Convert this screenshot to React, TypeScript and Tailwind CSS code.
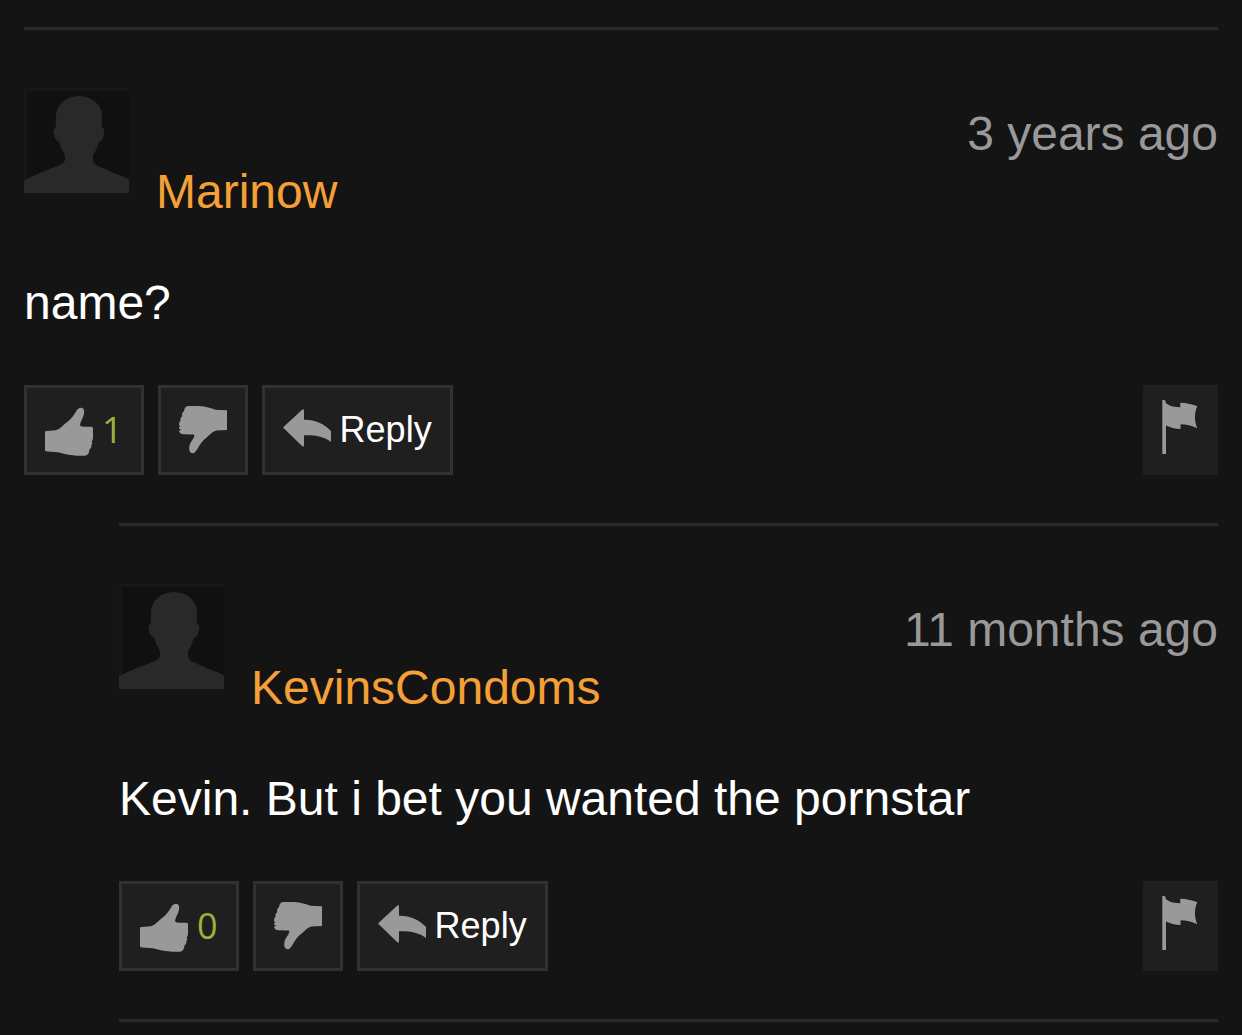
import { useState } from "react";
import clsx from "clsx";

type Comment = {
    id: string;
    author: string;
    posted: string;
    body: string;
    likes: number;
    replies: Comment[];
};

type CommentItemProps = {
    comment: Comment;
};

const comments: Comment[] = [
    {
        id: "c1",
        author: "Marinow",
        posted: "3 years ago",
        body: "name?",
        likes: 1,
        replies: [
            {
                id: "c2",
                author: "KevinsCondoms",
                posted: "11 months ago",
                body: "Kevin. But i bet you wanted the pornstar",
                likes: 0,
                replies: [],
            },
        ],
    },
];

const Avatar = () => (
    <svg viewBox="0 0 105 105" className="size-[105px] shrink-0" aria-hidden="true">
        <rect width="105" height="105" fill="#171717" />
        <rect x="3" y="3" width="102" height="102" fill="#101010" />
        <path
            fill="#292929"
            d="M0 92.500C5 89.500 11 87 18 84L36 77C40 75 41.500 73 41 69C41 65 38.500 63 37 60C36 57.500 36 55 34.700 53.500C32 52.500 31 50.500 30.300 48C29 44 29.300 41 31.700 39.500L32 28A23 20 0 0 1 78 28L77.700 39C80.500 40.500 81 44 79.700 48C79 51 77.500 53 75.300 53.700C73.500 56 73.500 59 72 62C70.500 65 69 66 69 69C69 73 69.500 75.500 73 77.500L91 85.500C96 87.500 101 89 105 91.500V105H0Z"
        />
    </svg>
);

const ThumbUpIcon = () => (
    <svg viewBox="0 0 48 56" className="h-14 w-12 shrink-0" fill="#999999" aria-hidden="true">
        <path d="M0 30C0 29.200 .8 29 2 28.900L10.700 28.200C13.500 27.800 15.500 25.500 18.300 23.200C21 21 23 19.500 25.300 17.300C28 14.500 29.500 12 31 9.500C32.500 7 34 5.800 36 5.800C38.200 5.800 39.300 7.500 39.200 10.500C39 13.500 37.300 16.500 36 19.500C35.200 21.500 34.500 23.500 36 24.200C37.500 24.800 43 24.600 46.500 24.800C47.600 24.900 48 25.300 48 26.300V35.500C48 37 47.700 38.500 46.500 39.500C47.600 40.500 47.500 42 46.300 43C46.800 45 46 46.500 44.500 47.300C44.200 50.500 43.300 53 40.500 53.800H32C26 53.300 21 52.300 16 51C12 49.700 8 49.600 2 49.400C.6 49.300 0 49 0 48Z" />
    </svg>
);

const ThumbDownIcon = () => (
    <svg viewBox="0 0 48 56" className="h-14 w-12 shrink-0" fill="#999999" aria-hidden="true">
        <path d="M0 23C0 21 .3 19.800 1.500 19C1 16.800 1.800 15.200 3.200 14.200C2.700 12 3.500 10.200 5 9.300C5.200 6.500 6.500 4.300 9 4H20C27 4.500 32 6.200 36.500 7.700L48 8.300V28L37.500 28.600C34.500 29.400 32 31.500 29 34.200C26.500 36.400 24 38.500 22 41.200C19.800 44 18.500 47.500 16.200 50C14.800 51.500 13 51.600 11.700 50.500C9.900 49 9.900 45 11 42C12.300 39.300 14 37.300 15 35C15.700 33.200 15.300 32.600 13.800 32.600L4.500 32.300C1.800 32.100 .2 30.800 0 28.800L1.600 28L1.300 26.800H0V25.300L1.300 24.500Z" />
    </svg>
);

const ReplyIcon = () => (
    <svg viewBox="0 0 48 56" className="h-14 w-12 shrink-0" fill="#999999" aria-hidden="true">
        <path d="M0 25.500L18.800 8C20.200 6.800 21 7.200 21 9V17.700C32 17.500 41 21.500 48 29V40C41 34.500 32 33 21 33.300V43C21 44.800 20.200 45 18.800 43.700Z" />
    </svg>
);

const FlagIcon = () => (
    <svg viewBox="0 0 37 60" className="h-15 w-[37px] shrink-0" fill="#999999" aria-hidden="true">
        <path d="M0.300 0H3L4 3.300C8 6.300 13 7.300 18.300 7.300V2.800C24 3 29.500 4 35.300 6.300C32.200 13 32.200 21 35.300 28.300C30 25.500 24 24.300 18.600 24.300V29C13 28.800 8 27.500 4 25.500V54H0.300Z" />
    </svg>
);

const actionClass = "flex h-[90px] items-center gap-[9px] border-3 border-[#313131] bg-[#1f1f1f] px-[18px]";

const CommentItem = ({ comment }: CommentItemProps) => {
    const [vote, setVote] = useState(0);
    const toggleVote = (value: number) => setVote(prev => (prev === value ? 0 : value));

    return (
        <li>
            <article className="border-t-3 border-[#2a2a2a] pt-[58px] pb-12">
                <header className="flex justify-between">
                    <div className="flex gap-[27px]">
                        <Avatar />
                        <a href="#profile" className="pt-[76px] text-[#f5a037]">{comment.author}</a>
                    </div>
                    <time className="pt-[18px] text-[#999999]">{comment.posted}</time>
                </header>
                <p className="pt-[55px] pb-[54px]">{comment.body}</p>
                <div className="flex justify-between">
                    <div className="flex gap-[14px] text-4xl">
                        <button type="button" aria-label="Like" aria-pressed={vote === 1} onClick={() => toggleVote(1)} className={actionClass}>
                            <ThumbUpIcon />
                            <span className="font-['Open_Sans',sans-serif] text-[#9eb03c]">{comment.likes + (vote === 1 ? 1 : 0)}</span>
                        </button>
                        <button type="button" aria-label="Dislike" aria-pressed={vote === -1} onClick={() => toggleVote(-1)} className={actionClass}>
                            <ThumbDownIcon />
                        </button>
                        <button type="button" className={actionClass}>
                            <ReplyIcon />
                            <span>Reply</span>
                        </button>
                    </div>
                    <button type="button" aria-label="Report" className="flex h-[90px] w-[75px] items-center justify-center bg-[#1f1f1f]">
                        <FlagIcon />
                    </button>
                </div>
            </article>
            {comment.replies.length > 0 && <CommentList comments={comment.replies} nested />}
        </li>
    );
};

const CommentList = ({ comments, nested = false }: { comments: Comment[]; nested?: boolean }) => (
    <ul className={clsx({ "ml-[95px] border-b-3 border-[#2a2a2a]": nested })}>
        {comments.map(comment => <CommentItem key={comment.id} comment={comment} />)}
    </ul>
);

export default function App() {
    return (
        <main className="min-h-screen bg-[#141414] px-6 pt-[27px] font-['Liberation_Sans',Arial,sans-serif] text-[48px] leading-[56px] text-white">
            <CommentList comments={comments} />
        </main>
    );
}
